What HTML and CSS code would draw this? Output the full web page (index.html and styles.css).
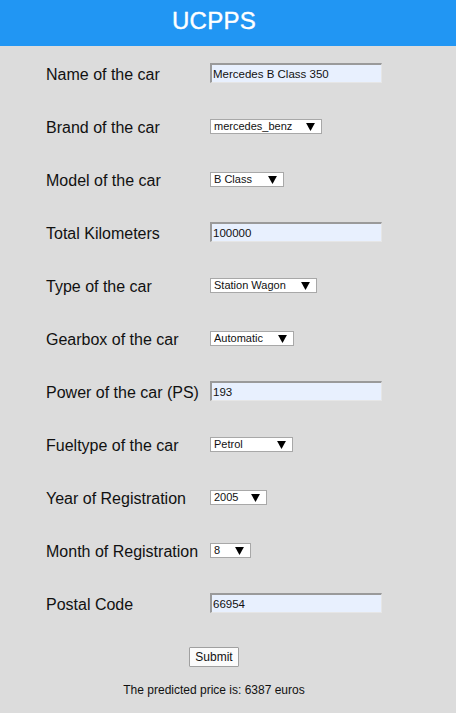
FILE: index.html
```html
<!DOCTYPE html>
<html>
<head>
<meta charset="utf-8">
<link rel="stylesheet" href="styles.css">
</head>
<body>
<header class="top"><h1 class="title">UCPPS</h1></header>
<form class="form">
  <div class="grid">
    <label class="lbl">Name of the car</label>
    <input class="txt" type="text" value="Mercedes B Class 350">

    <label class="lbl">Brand of the car</label>
    <select class="sel w-brand"><option>mercedes_benz</option></select>

    <label class="lbl">Model of the car</label>
    <select class="sel w-model"><option>B Class</option></select>

    <label class="lbl">Total Kilometers</label>
    <input class="txt" type="text" value="100000">

    <label class="lbl">Type of the car</label>
    <select class="sel w-type"><option>Station Wagon</option></select>

    <label class="lbl">Gearbox of the car</label>
    <select class="sel w-gear"><option>Automatic</option></select>

    <label class="lbl">Power of the car (PS)</label>
    <input class="txt" type="text" value="193">

    <label class="lbl">Fueltype of the car</label>
    <select class="sel w-fuel"><option>Petrol</option></select>

    <label class="lbl">Year of Registration</label>
    <select class="sel w-year"><option>2005</option></select>

    <label class="lbl">Month of Registration</label>
    <select class="sel w-month"><option>8</option></select>

    <label class="lbl">Postal Code</label>
    <input class="txt" type="text" value="66954">
  </div>
  <div class="actions"><button class="btn" type="button">Submit</button></div>
  <p class="result">The predicted price is: 6387 euros</p>
</form>
</body>
</html>
```
FILE: styles.css
```css
html, body {
  margin: 0;
  padding: 0;
}
body {
  background: #dcdcdc;
  font-family: "Comic Sans MS", "Liberation Sans", sans-serif;
  color: #111;
  width: 456px;
  height: 713px;
  overflow: hidden;
}
.top {
  background: #2196f3;
  height: 46px;
  display: flex;
  align-items: center;
  justify-content: center;
  padding: 0 28px 5px 0;
  box-sizing: border-box;
}
.title {
  margin: 0;
  color: #fff;
  font-size: 24px;
  line-height: 28px;
  font-weight: normal;
  letter-spacing: 0.3px;
  -webkit-text-stroke: 0.4px #fff;
}
.form {
  margin: 0;
}
.grid {
  display: grid;
  grid-template-columns: 164px 172px;
  grid-auto-rows: 53px;
  align-items: center;
  padding-left: 46px;
  padding-top: 1px;
}
.lbl {
  font-size: 16px;
  white-space: nowrap;
  padding-top: 2px;
}
.txt {
  width: 172px;
  height: 20px;
  box-sizing: border-box;
  margin: 0;
  margin-top: -2px;
  padding: 1px 1px 0;
  font-family: "Comic Sans MS", "Liberation Sans", sans-serif;
  font-size: 11.5px;
  color: #111;
  background: #e8f0fe;
  border-style: solid;
  border-width: 2px 1px 1px 2px;
  border-color: #9a9a9a #e6e6e6 #e6e6e6 #9a9a9a;
  outline: none;
}
.sel {
  -webkit-appearance: none;
  appearance: none;
  height: 15px;
  box-sizing: border-box;
  margin: 0;
  padding: 0 0 0 3px;
  font-family: "Comic Sans MS", "Liberation Sans", sans-serif;
  font-size: 11px;
  line-height: 13px;
  color: #111;
  background-color: #fff;
  background-image: url("data:image/svg+xml;utf8,<svg xmlns='http://www.w3.org/2000/svg' width='10' height='9' viewBox='0 0 10 9'><path d='M0 0H10L5 9Z' fill='black'/></svg>");
  background-repeat: no-repeat;
  background-position: right 6px center;
  background-size: 9px 8px;
  border: 1px solid #a8a8a8;
  border-radius: 0;
  justify-self: start;
  outline: none;
}
.w-brand { width: 112px; }
.w-model { width: 74px; }
.w-type { width: 107px; }
.w-gear { width: 84px; }
.w-fuel { width: 83px; }
.w-year { width: 57px; }
.w-month { width: 41px; }
.actions {
  display: flex;
  justify-content: center;
  padding: 17px 28px 0 0;
}
.btn {
  width: 50px;
  height: 20px;
  margin: 0;
  padding: 0;
  font-family: "Comic Sans MS", "Liberation Sans", sans-serif;
  font-size: 12px;
  color: #111;
  background: #fbfbfb;
  border: 1px solid #a0a0a0;
  border-radius: 1px;
}
.result {
  margin: 16px 0 0;
  padding-right: 28px;
  text-align: center;
  font-size: 12px;
}
```
